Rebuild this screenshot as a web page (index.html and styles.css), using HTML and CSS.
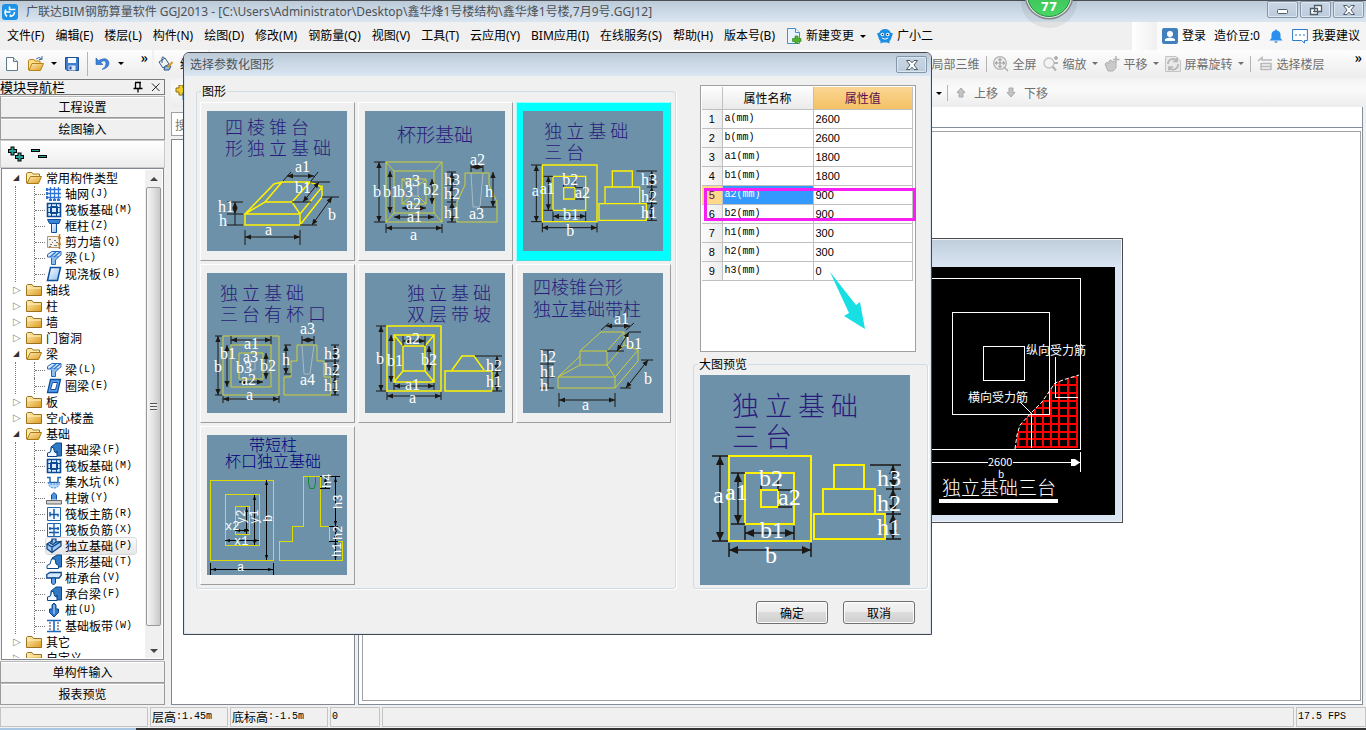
FILE: index.html
```html
<!DOCTYPE html>
<html lang="zh-CN">
<head>
<meta charset="utf-8">
<title>广联达BIM钢筋算量软件 GGJ2013</title>
<link rel="stylesheet" href="styles.css">
</head>
<body>
<svg class="defs" width="0" height="0" aria-hidden="true">
  <defs>
    <linearGradient id="gFolder" x1="0" y1="0" x2="1" y2="1"><stop offset="0" stop-color="#fff0b8"/><stop offset="1" stop-color="#dd9a1c"/></linearGradient>
    <linearGradient id="gBlue" x1="0" y1="0" x2="1" y2="1"><stop offset="0" stop-color="#ffffff"/><stop offset="1" stop-color="#8dbdf0"/></linearGradient>
    <linearGradient id="gOrb" x1="0" y1="0" x2="0" y2="1"><stop offset="0" stop-color="#2fae50"/><stop offset="1" stop-color="#4bd765"/></linearGradient>
    <marker id="arrow" viewBox="0 0 6 6" refX="6" refY="3" markerWidth="6" markerHeight="6" markerUnits="userSpaceOnUse" orient="auto-start-reverse"><path d="M0 0.4L6 3L0 5.6z" fill="#1c1814"/></marker>
    <marker id="arrowBig" viewBox="0 0 9 9" refX="9" refY="4.5" markerWidth="9" markerHeight="9" markerUnits="userSpaceOnUse" orient="auto-start-reverse"><path d="M0 0.5L9 4.5L0 8.5z" fill="#1c1814"/></marker>
    <marker id="arrowThin" viewBox="0 0 5 5" refX="5" refY="2.5" markerWidth="5" markerHeight="5" markerUnits="userSpaceOnUse" orient="auto-start-reverse"><path d="M0 1L5 2.5L0 4z" fill="#000"/></marker>
    <clipPath id="meshClip"><path d="M1015 450L1017 435L1020 425L1031 413L1042 402L1055 383L1066 379L1079 375V450z"/></clipPath>
  </defs>
  <symbol id="folder" viewBox="0 0 16 16"><path d="M.5 13.5V3.5L1.500 2.500H6L7.500 4.500H15.500V13.500z" fill="url(#gFolder)" stroke="#9a7220"/><path d="M1 6H15" stroke="#fff3c4"/></symbol>
  <symbol id="folderOpen" viewBox="0 0 16 16"><path d="M.5 13V3.500L2 2.500H6L7 4H13.500V7" fill="#ffe9a8" stroke="#a87a1c"/><path d="M1 13.500L4.500 6.500H15.500L12.500 13.500z" fill="url(#gFolder)" stroke="#a87a1c"/></symbol>
  <symbol id="grid" viewBox="0 0 16 16"><path d="M4.500 1V13M8.500 1V13M12.500 1V13M2 3.500H15M2 7.500H15M2 11.500H15" stroke="#2f72d8" stroke-width="1.300"/><path d="M3 13h3v2H3zM7 13h3v2H7zM11 13h3v2h-3zM0 2h2v3H0zM0 6h2v3H0zM0 10h2v3H0z" fill="#2f72d8"/></symbol>
  <symbol id="raft" viewBox="0 0 16 16"><path d="M1.500 1.500H14.500V14.500H1.500z" fill="#dcebff" stroke="#0a4a94" stroke-width="1.600"/><path d="M4.500 4.500H11.500V11.500H4.500zM1 5.500H15M1 10.500H15M5.500 1V15M10.500 1V15" fill="none" stroke="#0a4a94"/></symbol>
  <symbol id="column" viewBox="0 0 16 16"><path d="M1.500 1.500H14.500L13 5.500H3.500z" fill="#3c82d6" stroke="#0b4c9c"/><path d="M5.500 5.500H10.500V14.500H5.500z" fill="url(#gBlue)" stroke="#0b4c9c"/></symbol>
  <symbol id="wall" viewBox="0 0 16 16"><path d="M1.500 2.500H13.500V13.500H1.500z" fill="#f4f1ea" stroke="#b7956a"/><path d="M3 5h2v1H3zM6 8h1v1H6zM8 6h2v1H8zM4 10h2v1H4zM8 11h3v1H8zM10 8h2v1h-2zM3 12h2v1H3z" fill="#777"/><path d="M13.500 0V15M12 4H15M12 10H15" stroke="#b7791d" stroke-width="1.500"/></symbol>
  <symbol id="beam" viewBox="0 0 16 16"><path d="M1.500 4.500L6 1.500H15V5L12 7H1.500z" fill="#d6e8ff" stroke="#2568bc"/><path d="M4 7L10 2M8 7L14 2" stroke="#2f78cf" stroke-width="1.500"/><path d="M5.500 8V14.500H9.500V10L13 6.500" fill="#8bbcf3" stroke="#2568bc"/></symbol>
  <symbol id="slab" viewBox="0 0 16 16"><path d="M4.500 1.500H14.500L11.500 14.500H1.500z" fill="url(#gBlue)" stroke="#0c4f9f" stroke-width="1.500"/></symbol>
  <symbol id="ring" viewBox="0 0 16 16"><path d="M4.500 1.500H14.500L11.500 14.500H1.500z" fill="#5ba0ee" stroke="#0c4f9f" stroke-width="1.300"/><path d="M6.500 4.500H11.500L9.500 11.500H4.500z" fill="#fff" stroke="#0c4f9f"/></symbol>
  <symbol id="fbeam" viewBox="0 0 16 16"><path d="M5 5L10 1H15.500V14H11V9L8 14H5z" fill="#2f78c4" stroke="#0b4686"/><path d="M1.500 14.500V11L4.500 10L5.500 5.500H7.500L8.500 10L11 11V14.500z" fill="#eef6ff" stroke="#0b4686"/></symbol>
  <symbol id="pit" viewBox="0 0 16 16"><path d="M1 3.500H4V8.500H12V3.500H15" fill="none" stroke="#1e66b5" stroke-width="1.500"/><path d="M2 8Q3 14 8 14T14 8L12 10H4z" fill="#b7dbff" stroke="#3c85d0" stroke-dasharray="2 1"/></symbol>
  <symbol id="pier" viewBox="0 0 16 16"><path d="M5.500 9.500V5L8 2.500L10.500 5V9.500" fill="#4d95df" stroke="#0c4f9f"/><path d="M.5 10.500H15.500V14H.5z" fill="#d4d4d4" stroke="#666"/></symbol>
  <symbol id="mainbar" viewBox="0 0 16 16"><path d="M1.500 1.500H14.500V14.500H1.500z" fill="#f2f8ff" stroke="#1e66b5"/><path d="M8 3V13M4 6V8.500H12V10.500M4 10.500V8.500" fill="none" stroke="#1459a8" stroke-width="1.500"/></symbol>
  <symbol id="negbar" viewBox="0 0 16 16"><path d="M1.500 1.500H14.500V14.500H1.500z" fill="#f2f8ff" stroke="#1e66b5"/><path d="M8 2V14M3 6.500H13M3 10.500H13M4 5V8M12 5V8" stroke="#1459a8" stroke-width="1.300"/></symbol>
  <symbol id="footing" viewBox="0 0 16 16"><path d="M1 6L6 3V1H10V4L15 3.500V8L6 14.500L1 11z" fill="#9cc8f7" stroke="#0a3f7c" stroke-width="1.200"/><path d="M1 6L6 9L15 3.500M6 9V14M4 5L7 6.500L10 4M6 2V5" fill="none" stroke="#0a3f7c" stroke-width="1.200"/></symbol>
  <symbol id="strip" viewBox="0 0 16 16"><path d="M6 4L11 1H15.500V13H11z" fill="#2f78c4" stroke="#0b4686"/><path d="M1 14.500V11.500L4 10L5.500 5H9L10 10L12.500 11.500V14.500z" fill="#fff" stroke="#0b4686"/></symbol>
  <symbol id="cap" viewBox="0 0 16 16"><path d="M.8 4.500L4 2.500H15.200V5.500L13 8H.8z" fill="#d6e8ff" stroke="#0b4686" stroke-width="1.300"/><path d="M5.500 8H9.500V13L7.500 15L5.500 13z" fill="#5ba0ee" stroke="#0b4686"/></symbol>
  <symbol id="pile" viewBox="0 0 16 16"><path d="M8 1L10 3V7H12.500V10.500L8 15L3.500 10.500V7H6V3z" fill="#2e79cb" stroke="#0b4686"/><path d="M8 3V12" stroke="#cfe5ff"/></symbol>
  <symbol id="band" viewBox="0 0 16 16"><path d="M1 2.500H15M1 13.500H15" stroke="#1e66b5" stroke-width="1.500"/><path d="M4 4V12M12 4V12" stroke="#333" stroke-dasharray="2 1"/><path d="M8 3V13" stroke="#3d88dc" stroke-width="2"/></symbol>

  <symbol id="threeStep" viewBox="0 0 210 210">
    <rect width="210" height="210" fill="#6d91a8"/>
    <g class="lblTitle" font-size="27"><text x="32" y="41">独 立 基 础</text><text x="32" y="72">三 台</text></g>
    <g fill="none" stroke="#fff200" stroke-width="2"><path d="M29 81H111V166H29zM45 98H94V149H45zM61 115H78V132H61zM134 90H164V114H134zM123 114H175V139H123zM114 139H185V164H114z"/></g>
    <g stroke="#1c1814" stroke-width="1.500" fill="none"><path d="M12 81H28M12 166H28M31 98H45M31 149H45M61 104V114M78 104V114M78 115H92M78 132H92M45 151V165M94 151V165M29 168V182M111 168V182M170 90H201M186 114H201M186 139H201M186 164H201"/>
    <g marker-start="url(#arrowBig)" marker-end="url(#arrowBig)"><path d="M20 81V166"/><path d="M38 98V149"/><path d="M45 158H94"/><path d="M29 175H111"/><path d="M193 90V114"/><path d="M193 114V139"/><path d="M193 139V164"/></g></g>
    <g class="lbl" font-size="24"><text x="13" y="128">a</text><text x="25" y="125">a1</text><text x="59" y="111">b2</text><text x="78" y="130">a2</text><text x="60" y="163">b1</text><text x="65" y="188">b</text><text x="177" y="111">h3</text><text x="177" y="136">h2</text><text x="177" y="160">h1</text></g>
  </symbol>
</svg>

<div class="app">
  <header class="titlebar">
    <svg class="i16" viewBox="0 0 16 16"><rect width="16" height="16" rx="3" fill="#1b92e6"/><path d="M7.500 2.500V5.500H13.500M2.500 8H8.500M8.500 10.500V13M4 5.500A5 5 0 0 0 5 12.500M12.500 8A5 5 0 0 1 8.500 12.500" fill="none" stroke="#fff" stroke-width="1.600"/></svg>
    <h1>广联达BIM钢筋算量软件 GGJ2013 - [C:\Users\Administrator\Desktop\鑫华烽1号楼结构\鑫华烽1号楼,7月9号.GGJ12]</h1>
    <div class="winbtns">
      <button aria-label="最小化"><svg width="14" height="12" viewBox="0 0 14 12"><rect x="1.500" y="5.500" width="10" height="4" rx="1" fill="#fff" stroke="#4f5d6b"/></svg></button>
      <button aria-label="还原"><svg width="14" height="12" viewBox="0 0 14 12"><path d="M5.500 1.500H12.500V7.500H5.500zM2 4.500H8.500V10.500H1.500V4.500z" fill="#fff" stroke="#4f5d6b" stroke-width="1.300"/><path d="M4 7h2v1H4z" fill="#4f5d6b"/></svg></button>
      <button aria-label="关闭"><svg width="14" height="12" viewBox="0 0 14 12"><path d="M1.500 1.500H5L7 3.800L9 1.500H12.500L9 6L12.500 10.500H9L7 8.200L5 10.500H1.500L5 6z" fill="#fff" stroke="#4f5d6b"/></svg></button>
    </div>
    <svg class="orb" width="60" height="34" viewBox="0 0 60 34"><ellipse cx="30" cy="2" rx="28" ry="26" fill="#000" opacity=".06"/><circle cx="30" cy="-5" r="24.500" fill="#84888c"/><circle cx="30" cy="-5" r="23" fill="#e6e9e6"/><circle cx="30" cy="-5" r="21.500" fill="url(#gOrb)" stroke="#1f8a3c"/><text x="30" y="11" text-anchor="middle">77</text></svg>
  </header>

  <nav class="menubar">
    <button>文件(F)</button><button>编辑(E)</button><button>楼层(L)</button><button>构件(N)</button><button>绘图(D)</button><button>修改(M)</button><button>钢筋量(Q)</button><button>视图(V)</button><button>工具(T)</button><button>云应用(Y)</button><button>BIM应用(I)</button><button>在线服务(S)</button><button>帮助(H)</button><button>版本号(B)</button>
    <button class="ico"><svg class="i16" viewBox="0 0 16 16"><path d="M1.500 .5H9.500L13.500 4.500V15.500H1.500z" fill="#e9f4fd" stroke="#4a90c4"/><path d="M9.500 .5V4.500H13.500" fill="#fff" stroke="#4a90c4"/><path d="M9 8h3v2.500h3v3h-3V16H9v-2.500H6.500v-3H9z" fill="#4db528" stroke="#2e7d14" stroke-width=".6"/></svg>新建变更<i class="tri"></i></button>
    <button class="ico"><svg class="i16" viewBox="0 0 16 16"><path d="M8 1Q12.500 1 13.500 4.500L16 5.500L14.500 9.500Q14 12 12.500 13V15.500L10 14.500H6L3.500 15.500V13Q2 12 1.500 9.500L0 5.500L2.500 4.500Q3.500 1 8 1z" fill="#1b8fe4"/><circle cx="5.300" cy="6.500" r="1.800" fill="#fff"/><circle cx="10.700" cy="6.500" r="1.800" fill="#fff"/><circle cx="5.500" cy="6.500" r=".8" fill="#124"/><circle cx="10.500" cy="6.500" r=".8" fill="#124"/><path d="M5 10Q8 12.500 11 10" fill="none" stroke="#fff"/></svg>广小二</button>
    <div class="account">
      <button class="ico"><svg class="i16" viewBox="0 0 16 16"><rect width="16" height="16" rx="2" fill="#4080bc"/><circle cx="8" cy="6" r="3" fill="#fff"/><path d="M3 13V11Q8 8 13 11V13z" fill="#fff"/></svg>登录</button>
      <span>造价豆:0</span>
      <svg class="i16" viewBox="0 0 16 16"><path d="M8 1L9 2.500Q12.500 3 12.500 7V10L14.500 12.500H1.500L3.500 10V7Q3.500 3 7 2.500z" fill="#2b8ff0"/><path d="M6 13.500H10L8 15z" fill="#1668b8"/></svg>
      <button class="ico"><svg class="i16" viewBox="0 0 16 16"><path d="M.6 1.500H15.400V12.500H12.500V15L9.500 12.500H.6z" fill="#fff" stroke="#2b78cc"/><path d="M3 7H13" stroke="#2b78cc" stroke-dasharray="2 2"/></svg>我要建议</button>
    </div>
  </nav>

  <div class="toolbar">
    <div class="tgroup">
      <svg class="i16" viewBox="0 0 16 16"><path d="M2.500 1.500H9.500L13.500 5.500V14.500H2.500z" fill="#fff" stroke="#5d7d8f"/><path d="M9.500 1.500V5.500H13.500" fill="#dbe8ee" stroke="#5d7d8f"/></svg>
      <svg class="i16 mid" viewBox="0 0 16 16"><path d="M.5 14V4.500L2 3.500H6L7 5H12V7" fill="#ffdf8a" stroke="#b9831b"/><path d="M1 14.500L4 7.500H15.500L12.500 14.500z" fill="url(#gFolder)" stroke="#b9831b"/><path d="M8 3Q11 0 14 3M14 0V3.500H11" fill="none" stroke="#456f9e"/></svg><i class="tri"></i>
      <svg class="i16" viewBox="0 0 16 16"><path d="M1.500 1.500H14.500V14.500H3L1.500 13z" fill="#3f7fd0" stroke="#1d4f94"/><rect x="4" y="2" width="8" height="5" fill="#fff"/><rect x="4.500" y="9.500" width="7" height="5" fill="#dce9f6"/><rect x="5.500" y="10.500" width="2" height="3" fill="#1d4f94"/></svg>
      <i class="sep"></i>
      <svg class="i16" viewBox="0 0 16 16"><path d="M1 2V8.500H8L5.500 6.500Q10 3 11 7Q11.500 10.500 7 13.500Q14 12 14 6.500Q12 0 3.500 4.500z" fill="#3d83dc" stroke="#1d5bb0" stroke-width=".6"/></svg><i class="tri"></i>
      <b class="more">»</b>
    </div>
    <div class="tgroup">
      <svg class="i16" viewBox="0 0 16 16"><path d="M1 6L7 2L11 8L5 12z" fill="#eef3f8" stroke="#31597f"/><path d="M4 7V1.500Q5 0 6.500 2" fill="none" stroke="#31597f"/><path d="M7 10H13L11 14H6z" fill="#8fbbe8" stroke="#31597f"/><path d="M10 11L14.500 6" stroke="#d99b24" stroke-width="2"/></svg><span>绘图</span>
    </div>
    <div class="tgroup muted right">
      <span>局部三维</span><i class="sep"></i>
      <button class="ico"><svg class="i16" viewBox="0 0 16 16"><circle cx="7" cy="7" r="6.300" fill="#eee" stroke="#b3b3b3" stroke-width="1.300"/><path d="M7 2.500V11.500M2.500 7H11.500M5.500 4L7 2.500L8.500 4M5.500 10L7 11.500L8.500 10M4 5.500L2.500 7L4 8.500M10 5.500L11.500 7L10 8.500M11.500 11.500L15 15" fill="none" stroke="#a6a6a6" stroke-width="1.200"/></svg>全屏</button>
      <button class="ico"><svg class="i16" viewBox="0 0 16 16"><circle cx="6" cy="7" r="5" fill="#f3f3f3" stroke="#c2c2c2" stroke-width="1.300"/><path d="M9.500 10.500L13 14.500M11 2H15M13 0V4M11 7H15" stroke="#b2b2b2" stroke-width="2"/></svg>缩放<i class="tri"></i></button>
      <button class="ico"><svg class="i16" viewBox="0 0 16 16"><path d="M1 8L3 6L5 8V5L7 4L8 6L10 5L12 7V12L9 15H4z" fill="#cacaca" stroke="#b0b0b0"/><path d="M12 0V7M9 3.500H15.500" stroke="#b5b5b5" stroke-width="1.500"/></svg>平移<i class="tri"></i></button>
      <button class="ico"><svg class="i16" viewBox="0 0 16 16"><path d="M.5 .5H11L15.500 5V15.500H.5z" fill="#e9e9e9" stroke="#c4c4c4"/><path d="M3 8A5 5 0 0 1 12 5M13 8A5 5 0 0 1 4 11.500M12 1.500V5.500H8M4 14.500V11H8" fill="none" stroke="#b5b5b5" stroke-width="1.700"/></svg>屏幕旋转<i class="tri"></i></button>
      <i class="sep"></i>
      <button class="ico"><svg class="i16" viewBox="0 0 16 16"><path d="M1 5L5 1.500V4H15M4 7.500H14M4 10.500H14M4 13.500H14M4 7V14M14 7V14" fill="none" stroke="#b9b9b9" stroke-width="1.500"/></svg>选择楼层</button>
      <b class="more">»</b>
    </div>
  </div>

  <div class="work">
    <aside class="sidebar">
      <div class="paneHead"><span>模块导航栏</span><svg width="12" height="12" viewBox="0 0 12 12"><path d="M3.500 2V7M8 2V7M3 1.500H9M1.500 7.500H10.500M6 8V11.500" stroke="#000" fill="none" stroke-width="1.300"/></svg><svg width="12" height="12" viewBox="0 0 12 12"><path d="M2 2.500L9.500 10M9.500 2.500L2 10" stroke="#222"/></svg></div>
      <button class="navbtn">工程设置</button>
      <button class="navbtn">绘图输入</button>
      <div class="minibar"><svg width="44" height="18" viewBox="0 0 44 18"><g stroke="#000" stroke-width="4"><path d="M0 5H9M4.500 .5V9.500M7 11H16M11.500 6.500V15.500"/></g><g stroke="#000" stroke-width="3"><path d="M23 4.500H32M30 10.500H39"/></g><g stroke="#2aa198" stroke-width="2"><path d="M1 5H8M4.500 1.500V8.500M8 11H15M11.500 7.500V14.500"/></g><g stroke="#2aa198"><path d="M24 4.500H31M31 10.500H38"/></g></svg></div>
      <div class="treeBox">
        <ul class="tree">
          <li class="open"><p><svg><use href="#folderOpen"/></svg>常用构件类型</p>
            <ul>
              <li><svg><use href="#grid"/></svg>轴网<kbd>(J)</kbd></li>
              <li><svg><use href="#raft"/></svg>筏板基础<kbd>(M)</kbd></li>
              <li><svg><use href="#column"/></svg>框柱<kbd>(Z)</kbd></li>
              <li><svg><use href="#wall"/></svg>剪力墙<kbd>(Q)</kbd></li>
              <li><svg><use href="#beam"/></svg>梁<kbd>(L)</kbd></li>
              <li><svg><use href="#slab"/></svg>现浇板<kbd>(B)</kbd></li>
            </ul></li>
          <li><p><svg><use href="#folder"/></svg>轴线</p></li>
          <li><p><svg><use href="#folder"/></svg>柱</p></li>
          <li><p><svg><use href="#folder"/></svg>墙</p></li>
          <li><p><svg><use href="#folder"/></svg>门窗洞</p></li>
          <li class="open"><p><svg><use href="#folderOpen"/></svg>梁</p>
            <ul>
              <li><svg><use href="#beam"/></svg>梁<kbd>(L)</kbd></li>
              <li><svg><use href="#ring"/></svg>圈梁<kbd>(E)</kbd></li>
            </ul></li>
          <li><p><svg><use href="#folder"/></svg>板</p></li>
          <li><p><svg><use href="#folder"/></svg>空心楼盖</p></li>
          <li class="open"><p><svg><use href="#folderOpen"/></svg>基础</p>
            <ul>
              <li><svg><use href="#fbeam"/></svg>基础梁<kbd>(F)</kbd></li>
              <li><svg><use href="#raft"/></svg>筏板基础<kbd>(M)</kbd></li>
              <li><svg><use href="#pit"/></svg>集水坑<kbd>(K)</kbd></li>
              <li><svg><use href="#pier"/></svg>柱墩<kbd>(Y)</kbd></li>
              <li><svg><use href="#mainbar"/></svg>筏板主筋<kbd>(R)</kbd></li>
              <li><svg><use href="#negbar"/></svg>筏板负筋<kbd>(X)</kbd></li>
              <li><span class="picked"><svg><use href="#footing"/></svg>独立基础<kbd>(P)</kbd></span></li>
              <li><svg><use href="#strip"/></svg>条形基础<kbd>(T)</kbd></li>
              <li><svg><use href="#cap"/></svg>桩承台<kbd>(V)</kbd></li>
              <li><svg><use href="#fbeam"/></svg>承台梁<kbd>(F)</kbd></li>
              <li><svg><use href="#pile"/></svg>桩<kbd>(U)</kbd></li>
              <li><svg><use href="#band"/></svg>基础板带<kbd>(W)</kbd></li>
            </ul></li>
          <li><p><svg><use href="#folder"/></svg>其它</p></li>
          <li><p><svg><use href="#folder"/></svg>自定义</p></li>
        </ul>
        <div class="scroll"><i class="up"></i><div class="thumb"><i></i></div><i class="down"></i></div>
      </div>
      <button class="navbtn">单构件输入</button>
      <button class="navbtn">报表预览</button>
    </aside>

    <main class="main">
      <div class="toolbar2">
        <svg class="i16" viewBox="0 0 16 16"><path d="M5 0h4v3h3v4H9v3H5V7H2V3h3z" fill="#f2cf28" stroke="#8a6d10"/><path d="M9 8h6v7H9z" fill="#9cc6f0" stroke="#3d79b8"/></svg>
        <div class="muted order"><i class="tri dark"></i><i class="sep"></i>
          <button class="ico"><svg class="i16" viewBox="0 0 16 16"><path d="M8 3L12 7.500H10V12H6V7.500H4z" fill="#c4c4c4" stroke="#aaa"/></svg>上移</button>
          <button class="ico"><svg class="i16" viewBox="0 0 16 16"><path d="M8 12L12 7.500H10V3H6V7.500H4z" fill="#c4c4c4" stroke="#aaa"/></svg>下移</button></div>
      </div>
      <div class="panes">
        <section class="listPane"><input type="text" aria-label="搜索构件" placeholder="搜索构件..."><div class="list"></div></section>
        <section class="canvas"><div class="strip"></div><div class="sheet"></div></section>
      </div>
    </main>
  </div>

  <footer class="status"><span class="s1"></span><span class="s2">层高<kbd>:1.45m</kbd></span><span class="s3">底标高<kbd>:-1.5m</kbd></span><span class="s4"><kbd>0</kbd></span><span class="s5"></span><span class="s6"><kbd>17.5 FPS</kbd></span></footer>
  <div class="taskedge"></div>
</div>

<section class="mdi">
  <svg width="208" height="248" viewBox="907 267 208 248">
    <rect x="907" y="267" width="208" height="248" fill="#000"/>
    <g clip-path="url(#meshClip)" stroke="#f00" stroke-width="2"><path d="M1018 370V448M1027 370V448M1035 370V448M1043 370V448M1051 370V448M1059 370V448M1068 370V448M1077 370V448M1012 377H1078M1012 385H1078M1012 393H1078M1012 401H1078M1012 408H1078M1012 416H1078M1012 424H1078M1012 432H1078M1012 439H1078M1012 447H1078"/></g>
    <g fill="none" stroke="#fff" shape-rendering="crispEdges"><path d="M907 278.500H1080.500V449.500H907M952.500 312.500H1049.500V414.500H952.500zM983.500 346.500H1024.500V380.500H983.500zM1055.500 357V397.500H1078M1020 402L1031.500 413.500V448M907 462.500H988M1013 462.500H1080M1080.500 452V472"/></g>
    <path d="M1015 449L1017 435L1020 425L1031 413L1042 402L1055 383L1066 379L1079 375" fill="none" stroke="#fff" stroke-dasharray="4 2"/>
    <path d="M1071 459H1075L1080 462.500L1075 466H1071z" fill="#fff"/>
    <path d="M939 501H1058" stroke="#fff" stroke-width="4"/>
    <g fill="#fff" class="cad"><text x="1026" y="355" font-size="12">纵向受力筋</text><text x="968" y="402" font-size="12">横向受力筋</text><text x="988" y="466" font-size="11">2600</text><text x="998" y="478" font-size="10">b</text><text x="942" y="495" font-size="19" font-weight="300">独立基础三台</text></g>
  </svg>
</section>

<section class="dialog" role="dialog" aria-labelledby="dlgTitle">
  <div class="dlgHead"><h2 id="dlgTitle">选择参数化图形</h2><button aria-label="关闭"><svg width="14" height="12" viewBox="0 0 14 12"><path d="M1.500 1.500H5L7 3.800L9 1.500H12.500L9 6L12.500 10.500H9L7 8.200L5 10.500H1.500L5 6z" fill="#fff" stroke="#4f5d6b"/></svg></button></div>
  <div class="dlgBody">
    <fieldset class="shapes"><legend>图形</legend>
      <div class="tiles">
        <button class="tile"><svg viewBox="0 0 140 140"><rect width="140" height="140" fill="#6d91a8"/>
          <g class="lblTitle" font-size="18"><text x="18" y="23">四 棱 锥 台</text><text x="18" y="44">形 独 立 基 础</text></g>
          <path d="M38 103H93V114H38zM38 103L58 91H85L93 103L115 76V86L93 114M58 91L75 71M85 91L103 71M38 103L67 73L75 71H103L115 76" fill="none" stroke="#fff200" stroke-width="1.500"/>
          <g class="dim"><path d="M38 119V134M93 119V134M20 91H36M20 103H36M20 114H36M28 103V114M93 114H110M115 86H132M76 70L84 61M104 70L111 61M85 91H104M103 71H123"/><g class="arr"><path d="M38 126H93"/><path d="M28 91V103"/><path d="M105 114L125 86"/><path d="M80 65H107"/><path d="M96 91L112 71"/></g></g>
          <g class="lbl"><text x="88" y="61">a1</text><text x="88" y="82">b1</text><text x="121" y="109">b</text><text x="58" y="124">a</text><text x="11" y="101">h1</text><text x="12" y="115">h</text></g></svg></button>
        <button class="tile"><svg viewBox="0 0 140 140"><rect width="140" height="140" fill="#6d91a8"/>
          <g class="lblTitle" font-size="19"><text x="32" y="31">杯形基础</text></g>
          <path d="M21 51H77V111H21zM29 60H69V102H29zM37 68H61V93H37zM21 51L29 60M77 51L69 60M21 111L29 102M77 111L69 102M37 68L46 75M61 68L53 75M37 93L46 85M61 93L53 85M100 62H124V74L132 91V111H92V91L100 74z" fill="none" stroke="#cdcf38"/>
          <path d="M46 75H53V85H46zM106 62L108 96H115L118 62" fill="none" stroke="#a9bac4"/>
          <g class="dim"><path d="M9 51H20M9 111H20M21 113V122M77 113V122M106 53V61M118 53V61M115 96H131M82 61H91M82 74H91M82 91H91M82 111H91"/><g class="arr"><path d="M14 51V111"/><path d="M25 60V102"/><path d="M67 68V93"/><path d="M87 61V74"/><path d="M87 74V91"/><path d="M87 91V111"/><path d="M21 117H77"/><path d="M37 97H61"/><path d="M29 106H69"/><path d="M106 56H118"/><path d="M128 61V96"/></g></g>
          <g class="lbl"><text x="8" y="86">b</text><text x="18" y="86">b1</text><text x="32" y="86">b3</text><text x="40" y="75">a3</text><text x="58" y="84">b2</text><text x="41" y="98">a2</text><text x="42" y="111">a1</text><text x="45" y="129">a</text><text x="79" y="74">h3</text><text x="79" y="88">h2</text><text x="79" y="107">h1</text><text x="105" y="54">a2</text><text x="120" y="86">h</text><text x="104" y="108">a3</text></g></svg></button>
        <button class="tile active"><svg viewBox="0 0 210 210"><use href="#threeStep" width="210" height="210"/></svg></button>
        <button class="tile"><svg viewBox="0 0 140 140"><rect width="140" height="140" fill="#6d91a8"/>
          <g class="lblTitle" font-size="18"><text x="13" y="27">独 立 基 础</text><text x="13" y="48">三 台 有 杯 口</text></g>
          <path d="M16 63H72V122H16zM24 72H64V114H24zM32 80H56V106H32zM90 72H110V88H117V104H124V122H77V104H84V88H90z" fill="none" stroke="#cdcf38"/><path d="M40 89H48V97H40zM95 72L97 101H103L107 72" fill="none" stroke="#a9bac4"/>
          <g class="dim"><path d="M8 63H15M8 122H15M16 123V130M72 123V130M77 72H84M77 101H84M124 72H132M118 88H132M124 104H132M124 122H132M95 63V71M107 63V71M24 63V71M64 63V71"/><g class="arr"><path d="M11 63V122"/><path d="M20 72V114"/><path d="M59 80V106"/><path d="M24 67H64"/><path d="M32 109H56"/><path d="M16 126H72"/><path d="M79 72V101"/><path d="M128 72V88"/><path d="M128 88V104"/><path d="M128 104V122"/><path d="M95 67H107"/></g></g>
          <g class="lbl"><text x="7" y="99">b</text><text x="13" y="86">b1</text><text x="37" y="76">a1</text><text x="36" y="89">a3</text><text x="29" y="100">b3</text><text x="53" y="98">b2</text><text x="34" y="112">a2</text><text x="39" y="127">a</text><text x="93" y="61">a3</text><text x="75" y="92">h</text><text x="93" y="112">a4</text><text x="117" y="86">h3</text><text x="117" y="102">h2</text><text x="117" y="118">h1</text></g></svg></button>
        <button class="tile"><svg viewBox="0 0 140 140"><rect width="140" height="140" fill="#6d91a8"/>
          <g class="lblTitle" font-size="18"><text x="42" y="27">独 立 基 础</text><text x="42" y="48">双 层 带 坡</text></g>
          <path d="M22 53H76V118H22zM29 62H69V109H29zM38 73H60V98H38zM29 62L38 73M69 62L60 73M29 109L38 98M69 109L60 98M80 98H127V118H80zM87 97L97 83H109L119 97" fill="none" stroke="#fff200" stroke-width="1.500"/>
          <g class="dim"><path d="M11 53H21M11 118H21M38 63V73M60 63V73M29 110V117M69 110V117M22 119V127M76 119V127M110 83H137M127 98H137M127 118H137"/><g class="arr"><path d="M16 53V118"/><path d="M26 62V109"/><path d="M38 68H60"/><path d="M64 73V98"/><path d="M29 113H69"/><path d="M22 123H76"/><path d="M132 83V98"/><path d="M132 98V118"/></g></g>
          <g class="lbl"><text x="11" y="91">b</text><text x="22" y="93">b1</text><text x="40" y="71">a2</text><text x="56" y="92">b2</text><text x="40" y="117">a1</text><text x="44" y="130">a</text><text x="121" y="98">h2</text><text x="121" y="114">h1</text></g></svg></button>
        <button class="tile"><svg viewBox="0 0 140 140"><rect width="140" height="140" fill="#6d91a8"/>
          <g class="lblTitle" font-size="18"><text x="10" y="21">四棱锥台形</text><text x="10" y="43">独立基础带柱</text></g>
          <path d="M35 104H92V115H35zM92 115L115 88V77L92 104L84 92L101 72V59L84 78V92H57V78H84M57 78L78 59H101M35 104L57 92M35 104L57 83M101 72L115 77" fill="none" stroke="#cdcf38"/>
          <g class="dim thin"><path d="M36 120V134M92 120V134M17 77H31M17 91H31M17 104H31M17 115H31M25 77V115M78 57L86 50M103 57L111 50M84 78H101M106 59H118M97 115H108M118 87H130"/><g class="arr"><path d="M36 127H92"/><path d="M83 53H107"/><path d="M94 78L106 59"/><path d="M103 115L125 87"/></g></g>
          <g class="lbl"><text x="91" y="51">a1</text><text x="103" y="76">b1</text><text x="121" y="111">b</text><text x="59" y="137">a</text><text x="17" y="89">h2</text><text x="17" y="104">h1</text><text x="17" y="118">h</text></g></svg></button>
        <button class="tile"><svg viewBox="0 0 140 140"><rect width="140" height="140" fill="#6d91a8"/>
          <g class="capTitle"><text x="42" y="16">带短柱</text><text x="18" y="32">杯口独立基础</text></g>
          <path d="M3.500 45.500H66.500V125.500H3.500zM18.500 59.500H52.500V110.500H18.500zM28.500 71.500H42.500V99.500H28.500zM96.500 41.500H113.500V91.500H122.500V106.500H135.500V125.500H72.500V106.500H85.500V91.500H96.500z" fill="none" stroke="#dcdc00" shape-rendering="crispEdges"/><path d="M101.500 42V48L103 53.500H107L108.500 48V42" fill="none" stroke="#168a2c"/>
          <g class="dim fine"><path d="M3.500 128V140M66.500 128V140M113 41.500H133M113 53.500H123M122 91.500H131M122 106.500H131"/><g><path d="M59.500 45V125"/><path d="M47.500 60V110"/><path d="M39.500 72V99"/><path d="M28 95.500H42"/><path d="M18 105.500H52"/><path d="M4 134.500H66"/><path d="M118.500 42V53"/><path d="M128.500 42V91"/><path d="M128.500 92V106"/><path d="M128.500 106V125"/></g></g>
          <g class="capLbl"><text x="30" y="136">a</text><text x="18" y="95">x2</text><text x="27" y="110">x1</text><text transform="translate(38 89) rotate(-90)">y2</text><text transform="translate(51 89) rotate(-90)">y1</text><text transform="translate(65 87) rotate(-90)">b</text><text transform="translate(124 53) rotate(-90)">h4</text><text transform="translate(135 74) rotate(-90)">h3</text><text transform="translate(135 105) rotate(-90)">h2</text><text transform="translate(134 122) rotate(-90)">h1</text></g></svg></button>
      </div>
    </fieldset>
    <div class="side">
      <div class="propBox">
        <table>
          <colgroup><col class="cNo"><col class="cName"><col></colgroup>
          <thead><tr><th></th><th>属性名称</th><th class="hot">属性值</th></tr></thead>
          <tbody>
            <tr><th>1</th><td>a(mm)</td><td>2600</td></tr>
            <tr><th>2</th><td>b(mm)</td><td>2600</td></tr>
            <tr><th>3</th><td>a1(mm)</td><td>1800</td></tr>
            <tr><th>4</th><td>b1(mm)</td><td>1800</td></tr>
            <tr class="sel"><th>5</th><td>a2(mm)</td><td>900</td></tr>
            <tr><th>6</th><td>b2(mm)</td><td>900</td></tr>
            <tr><th>7</th><td>h1(mm)</td><td>300</td></tr>
            <tr><th>8</th><td>h2(mm)</td><td>300</td></tr>
            <tr><th>9</th><td>h3(mm)</td><td>0</td></tr>
          </tbody>
        </table>
        <div class="mark"></div>
        <svg class="pointer" width="40" height="62" viewBox="0 0 40 62"><path d="M1 1L27 34L31 31L36 58L15 45L20 42z" fill="#17dfe3"/></svg>
      </div>
      <fieldset class="preview"><legend>大图预览</legend><svg viewBox="0 0 210 210"><use href="#threeStep" width="210" height="210"/></svg></fieldset>
      <div class="actions"><button>确定</button><button>取消</button></div>
    </div>
  </div>
</section>
</body>
</html>
```
FILE: styles.css
```css
* { box-sizing: border-box; }
html, body { height: 100%; }
body {
  margin: 0;
  overflow: hidden;
  background: #f0f0f0;
  color: #000;
  font: 12px/16px "Noto Sans CJK SC", "Noto Sans", sans-serif;
}
button {
  margin: 0;
  padding: 0;
  border: 0;
  background: none;
  color: inherit;
  font: inherit;
  white-space: nowrap;
}
h1, h2, p, ul { margin: 0; padding: 0; font-size: 12px; font-weight: 400; list-style: none; }
kbd { font: 10px/16px "Liberation Mono", monospace; }
.defs { position: absolute; }
.i16 { width: 16px; height: 16px; flex: none; }
.ico { display: flex; align-items: center; gap: 4px; }
.tri { flex: none; width: 0; height: 0; border: 3px solid transparent; border-top-color: #000; border-bottom: 0; }
.sep { flex: none; width: 1px; height: 16px; background: #b4b4b4; }
.more { color: #000; font-size: 14px; line-height: 14px; align-self: flex-start; }

.app { display: flex; flex-direction: column; height: 100vh; min-width: 1100px; }

.titlebar {
  position: relative;
  display: flex;
  align-items: center;
  gap: 8px;
  height: 22px;
  padding: 0 2px;
  border-top: 1px solid #4a4f55;
  background: linear-gradient(#bccad8, #dae6f2);
  color: #4c5258;
}
.titlebar h1 { flex: 1; white-space: nowrap; font-family: "Noto Sans", "Noto Sans CJK SC", sans-serif; }
.winbtns { display: flex; align-self: flex-start; gap: 2px; }
.winbtns button, .dlgHead button {
  display: flex;
  align-items: center;
  justify-content: center;
  width: 31px;
  height: 17px;
  border: 1px solid #8596a8;
  border-radius: 2px;
  background: linear-gradient(#c9d6e4, #bccbdb);
  box-shadow: inset 0 0 0 1px #dde7f1;
}
.orb { position: absolute; top: -1px; right: 287px; z-index: 2; }
.orb text { fill: #fff; font: bold 12px "DejaVu Sans", sans-serif; }

.menubar { display: flex; align-items: center; gap: 11px; height: 28px; padding-left: 7px; font-family: "Noto Sans", "Noto Sans CJK SC", sans-serif; }
.menubar .ico .tri { margin-left: 2px; }
.account {
  display: flex;
  align-items: center;
  gap: 8px;
  align-self: stretch;
  margin-left: auto;
  padding: 0 6px 0 30px;
  background: linear-gradient(90deg, #fff, #f0f0f0 24px, #fbfbfb 26px, #f3f3f3);
}

.toolbar { display: flex; gap: 2px; height: 29px; flex: none; background: #f0f0f0; }
.tgroup {
  display: flex;
  align-items: center;
  gap: 6px;
  height: 27px;
  padding: 0 4px;
  background: linear-gradient(#fdfdfd, #ededed);
}
.tgroup:first-child { width: 152px; gap: 7px; }
.tgroup:first-child .sep { height: 24px; }
.tgroup .mid { margin-left: 1px; }
.tgroup .more { margin-top: 0; margin-left: auto; }
.right { flex: 1; justify-content: flex-end; }
.tgroup.right .more { margin-left: 24px; }
.right .tri { margin: 0 0 0 1px; }
.muted { color: #6f6f6f; }
.muted .tri { border-top-color: #6f6f6f; }
.muted .dark { border-top-color: #000; }

.work { display: flex; flex: 1; min-height: 0; gap: 6px; }
.sidebar { display: flex; flex-direction: column; width: 165px; flex: none; }
.paneHead { display: flex; align-items: center; height: 16px; gap: 6px; padding-right: 2px; border: 1px solid #7b7b7b; border-left: 0; }
.paneHead span { flex: 1; font-size: 13px; line-height: 14px; }
.navbtn { flex: none; height: 22px; border: 1px solid #9b9b9b; border-top-color: #b8b8b8; box-shadow: inset 0 1px #fff; background: #f0f0f0; }
.paneHead + .navbtn { margin-top: 1px; }
.minibar { flex: none; height: 28px; padding: 5px 7px; border: 1px solid #c9c9c9; background: linear-gradient(#fff, #ececec); }
.treeBox { display: flex; flex: 1; min-height: 0; margin: 0 1px 1px; padding: 1px; overflow: hidden; border: 1px solid #828790; background: #fff; }
.tree { flex: 1; overflow: hidden; white-space: nowrap; }
.tree svg { width: 16px; height: 16px; flex: none; }
.tree p { display: flex; align-items: center; height: 16px; gap: 4px; padding-left: 10px; }
.tree p::before { content: "▷"; width: 8px; margin-right: 1px; color: #8a8a8a; font: 10px/16px "DejaVu Sans", sans-serif; }
.tree .open > p::before { content: "◢"; color: #333; font-size: 8px; }
.tree ul { margin-left: 12px; border-left: 1px dotted #777; }
.tree ul li { display: flex; align-items: center; height: 16px; margin-left: 18px; border-left: 1px dotted #777; }
.tree ul li::before { content: ""; width: 10px; margin-right: 1px; border-top: 1px dotted #777; }
.tree ul svg { margin-right: 3px; }
.tree kbd { margin-left: 1px; }
.picked { display: flex; align-items: center; height: 16px; padding-right: 4px; border-radius: 3px; box-shadow: 0 0 0 1px #d9d9d9; background: linear-gradient(#fafafa, #e6e6e6); }
.scroll { display: flex; flex-direction: column; align-items: center; width: 17px; background: #f0f0f0; }
.up, .down { height: 17px; display: flex; align-items: center; }
.up::before, .down::before { content: ""; border: 4px solid transparent; border-bottom-color: #444; border-top: 0; }
.down::before { border-bottom: 0; border-top: 4px solid #444; }
.down { height: 32px; align-items: flex-end; padding-bottom: 5px; }
.thumb { display: flex; align-items: center; justify-content: center; flex: 1; width: 15px; border: 1px solid #989898; border-radius: 2px; background: linear-gradient(90deg, #f6f6f6, #dcdcdc 60%, #c8c8c8); }
.thumb i { width: 7px; height: 8px; background: repeating-linear-gradient(#555 0 1px, #eee 1px 3px); }

.main { display: flex; flex-direction: column; flex: 1; min-width: 0; }
.toolbar2 { display: flex; align-items: center; height: 28px; flex: none; padding-left: 3px; background: linear-gradient(#f4f4f4, #fafafa 40%, #ececec); }
.order { display: flex; align-items: center; gap: 5px; margin-left: auto; padding-right: 318px; }
.order .ico { gap: 5px; }
.panes { display: flex; flex: 1; min-height: 0; gap: 3px; }
.listPane { display: flex; flex-direction: column; width: 184px; gap: 3px; padding-top: 5px; }
.listPane input { height: 24px; margin: 0; padding: 0 3px; border: 1px solid #a0a0a0; background: #fff; font: inherit; }
.list { flex: 1; border: 1px solid #828790; background: #fff; }
.canvas { display: flex; flex-direction: column; flex: 1; gap: 3px; margin-right: 3px; padding: 0 1px 3px 3px; border: 1px solid #828e9c; border-top: 0; background: #fff; }
.strip { height: 21px; flex: none; margin: 0 -1px 0 -3px; border-bottom: 1px solid #828e9c; }
.sheet { flex: 1; border: 1px solid #a0a0a0; }

.status { display: flex; gap: 2px; height: 20px; flex: none; margin-top: 2px; white-space: nowrap; }
.status span { padding: 1px 1px; border: 1px solid #c4c4c4; }
.s1 { width: 148px; }
.s2 { width: 78px; }
.s3 { width: 98px; }
.s4 { width: 50px; }
.s5 { flex: 1; }
.s6 { width: 70px; }
.status kbd { vertical-align: top; }
.taskedge { height: 2px; margin-top: 1px; flex: none; background: linear-gradient(90deg, #a9c6e2 136px, #333 136px); }

.mdi { position: absolute; left: 899px; top: 238px; padding: 28px 7px 7px; border: 1px solid #4b4b4b; background: linear-gradient(#bfcddb, #d9e5f2 28px); box-shadow: inset 0 0 0 1px #eef4fa; }
.mdi svg { display: block; }
.cad { font-family: "Noto Sans CJK SC", sans-serif; }

.dialog { position: absolute; left: 183px; top: 52px; width: 749px; border: 1px solid #45494e; border-radius: 6px 6px 0 0; background: #f0f0f0; overflow: hidden; }
.dlgHead { display: flex; justify-content: space-between; height: 23px; padding: 3px 4px 0 6px; background: linear-gradient(#bccad8, #dae6f2); color: #4c5258; }
.dlgBody { display: grid; grid-template-columns: 480px 1fr; gap: 17px; align-items: start; padding: 8px 2px 9px 11px; border: 1px solid #d7e4f0; border-top: 0; }
fieldset { min-width: 0; margin: 0; padding: 4px 3px 3px; border: 1px solid #d0dbe2; border-radius: 3px; box-shadow: 1px 1px #fff; }
legend { margin-left: 1px; padding: 0 1px; line-height: 14px; }
.tiles { display: grid; grid-template-columns: repeat(3, 155px); gap: 3px; }
.tile { display: flex; height: 159px; padding: 8px 6px; border: 1px solid; border-color: #fff #9d9d9d #9d9d9d #fff; }
.tile svg { width: 140px; height: 140px; }
.active { background: #0ff; border-color: #9ff #4dd #4dd #9ff; }
.lblTitle { fill: #2a1a7c; font-family: "Noto Sans CJK SC", sans-serif; font-weight: 300; }
.lbl { fill: #fff; font-family: "Liberation Serif", serif; }
.tile .lbl { font-size: 16px; }
.dim { fill: none; stroke: #1c1814; stroke-width: 1; }
.arr path { marker-start: url(#arrow); marker-end: url(#arrow); }
.fine { stroke: #000; shape-rendering: crispEdges; }
.fine g path { marker-start: url(#arrowThin); marker-end: url(#arrowThin); }
.capTitle { fill: #000080; font-size: 16px; font-weight: 300; }
.capLbl { fill: #fff; font: 12px "Liberation Mono", monospace; }

.side { display: flex; flex-direction: column; gap: 5px; width: 235px; padding-top: 1px; }
.propBox { position: relative; width: 216px; height: 267px; margin-left: 7px; padding: 1px; border: 1px solid #a0a0a0; background: #fff; }
table { width: 211px; table-layout: fixed; border-collapse: collapse; line-height: 14px; }
.cNo { width: 20px; }
.cName { width: 91px; }
th, td { height: 19px; padding: 0 2px; border: 1px solid #c0c0c0; border-top: 0; border-left: 0; text-align: left; font: 11px/14px "Liberation Sans", sans-serif; }
th { padding: 0; background: linear-gradient(90deg, #fafafa, #ececec); text-align: center; }
td:nth-child(2) { font: 10px/14px "Liberation Mono", monospace; }
thead th { height: 22px; background: linear-gradient(#fdfdfd, #eaeaea); font: 12px/16px "Noto Sans CJK SC", sans-serif; }
thead .hot { background: linear-gradient(#fad593, #f4c164); color: #5c0f4e; }
.sel th { background: #ffd98a; color: #5c0f4e; }
.sel td:nth-child(2) { background: #3399ff; color: #fff; }
.mark { position: absolute; left: 3px; top: 102px; width: 212px; height: 33px; border: 3px solid #f71ff3; }
.pointer { position: absolute; left: 128px; top: 185px; }
.preview { padding-left: 6px; }
.preview legend { margin-left: -2px; }
.preview svg { display: block; width: 210px; height: 210px; }
.actions { display: flex; justify-content: flex-end; gap: 15px; margin-top: 7px; padding-right: 13px; }
.actions button { width: 72px; height: 23px; border: 1px solid #707070; border-radius: 3px; background: linear-gradient(#f4f4f4, #ebebeb 50%, #dcdcdc 50%, #cfcfcf); box-shadow: inset 0 0 0 1px #fcfcfc; }
```
